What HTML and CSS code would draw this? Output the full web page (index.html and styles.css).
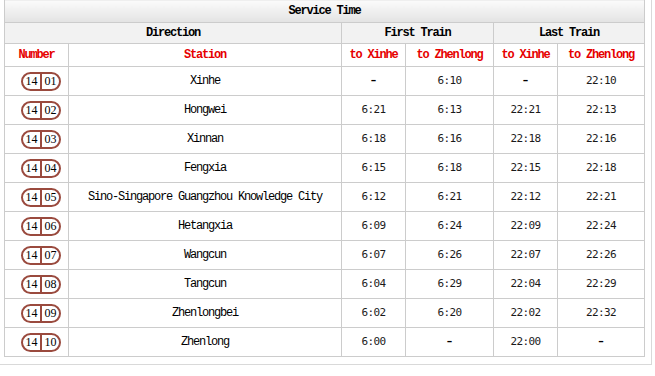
FILE: index.html
```html
<!DOCTYPE html>
<html>
<head>
<meta charset="utf-8">
<link rel="stylesheet" href="styles.css">
</head>
<body>
<div class="wrap">
<table class="sched">
<colgroup>
<col class="c-num"><col class="c-st"><col class="c-t1"><col class="c-t2"><col class="c-t3"><col class="c-t4">
</colgroup>
<tr class="title"><th colspan="6">Service Time</th></tr>
<tr class="group"><th colspan="2">Direction</th><th colspan="2">First Train</th><th colspan="2">Last Train</th></tr>
<tr class="cols"><th>Number</th><th>Station</th><th>to Xinhe</th><th>to Zhenlong</th><th>to Xinhe</th><th>to Zhenlong</th></tr>
<tr><td class="num"><span class="pill"><span>14</span><span>01</span></span></td><td class="st">Xinhe</td><td class="dash">–</td><td class="tm">6:10</td><td class="dash">–</td><td class="tm">22:10</td></tr>
<tr><td class="num"><span class="pill"><span>14</span><span>02</span></span></td><td class="st">Hongwei</td><td class="tm">6:21</td><td class="tm">6:13</td><td class="tm">22:21</td><td class="tm">22:13</td></tr>
<tr><td class="num"><span class="pill"><span>14</span><span>03</span></span></td><td class="st">Xinnan</td><td class="tm">6:18</td><td class="tm">6:16</td><td class="tm">22:18</td><td class="tm">22:16</td></tr>
<tr><td class="num"><span class="pill"><span>14</span><span>04</span></span></td><td class="st">Fengxia</td><td class="tm">6:15</td><td class="tm">6:18</td><td class="tm">22:15</td><td class="tm">22:18</td></tr>
<tr><td class="num"><span class="pill"><span>14</span><span>05</span></span></td><td class="st">Sino-Singapore Guangzhou Knowledge City</td><td class="tm">6:12</td><td class="tm">6:21</td><td class="tm">22:12</td><td class="tm">22:21</td></tr>
<tr><td class="num"><span class="pill"><span>14</span><span>06</span></span></td><td class="st">Hetangxia</td><td class="tm">6:09</td><td class="tm">6:24</td><td class="tm">22:09</td><td class="tm">22:24</td></tr>
<tr><td class="num"><span class="pill"><span>14</span><span>07</span></span></td><td class="st">Wangcun</td><td class="tm">6:07</td><td class="tm">6:26</td><td class="tm">22:07</td><td class="tm">22:26</td></tr>
<tr><td class="num"><span class="pill"><span>14</span><span>08</span></span></td><td class="st">Tangcun</td><td class="tm">6:04</td><td class="tm">6:29</td><td class="tm">22:04</td><td class="tm">22:29</td></tr>
<tr><td class="num"><span class="pill"><span>14</span><span>09</span></span></td><td class="st">Zhenlongbei</td><td class="tm">6:02</td><td class="tm">6:20</td><td class="tm">22:02</td><td class="tm">22:32</td></tr>
<tr><td class="num"><span class="pill"><span>14</span><span>10</span></span></td><td class="st">Zhenlong</td><td class="tm">6:00</td><td class="dash">–</td><td class="tm">22:00</td><td class="dash">–</td></tr>
</table>
</div>
</body>
</html>
```
FILE: styles.css
```css
html, body { margin: 0; padding: 0; background: #fff; }
.wrap {
  width: 641px;
  margin: -2px 0 0 -4px;
  border: 1px solid #d9d9d9;
  padding: 0 6px 7px 7px;
  background: #fff;
}
.sched {
  width: 641px;
  table-layout: fixed;
  border-collapse: collapse;
  font-family: "Liberation Mono", "DejaVu Sans Mono", monospace;
  font-size: 12px;
  letter-spacing: -1.2px;
  color: #000;
}
.c-num { width: 64px; }
.c-st { width: 273px; }
.c-t1 { width: 64px; }
.c-t2 { width: 88px; }
.c-t3 { width: 64px; }
.c-t4 { width: 87px; }
.sched th, .sched td {
  border: 1px solid #cccccc;
  padding: 0;
  text-align: center;
  vertical-align: middle;
  line-height: 14px;
}
.sched th { font-weight: bold; }
.title th {
  height: 22px;
  background: linear-gradient(#fbfbfb, #e3e3e3);
}
.group th {
  height: 20px;
  background: #f2f2f2;
}
.cols th {
  height: 22px;
  color: #e60000;
  background: #fff;
}
.sched td { height: 28px; }
.sched td.num { text-align: left; padding-left: 16px; }
.pill {
  display: inline-flex;
  box-sizing: border-box;
  width: 40px;
  height: 19px;
  border: 2px solid #9a4a3e;
  border-radius: 10px;
  font-family: "Liberation Serif", "Times New Roman", serif;
  font-size: 12px;
  letter-spacing: 0;
  line-height: 15px;
  color: #000;
  vertical-align: middle;
  margin-top: 1px;
}
.pill span { flex: 1; text-align: center; }
.pill span + span { border-left: 2px solid #9a4a3e; }
.tm {
  font-family: "DejaVu Sans Mono", monospace;
  font-size: 11px;
  letter-spacing: -0.6px;
  color: #1a1a1a;
}
.dash { font-family: "DejaVu Sans", sans-serif; font-weight: bold; font-size: 11px; letter-spacing: 0; }
```
